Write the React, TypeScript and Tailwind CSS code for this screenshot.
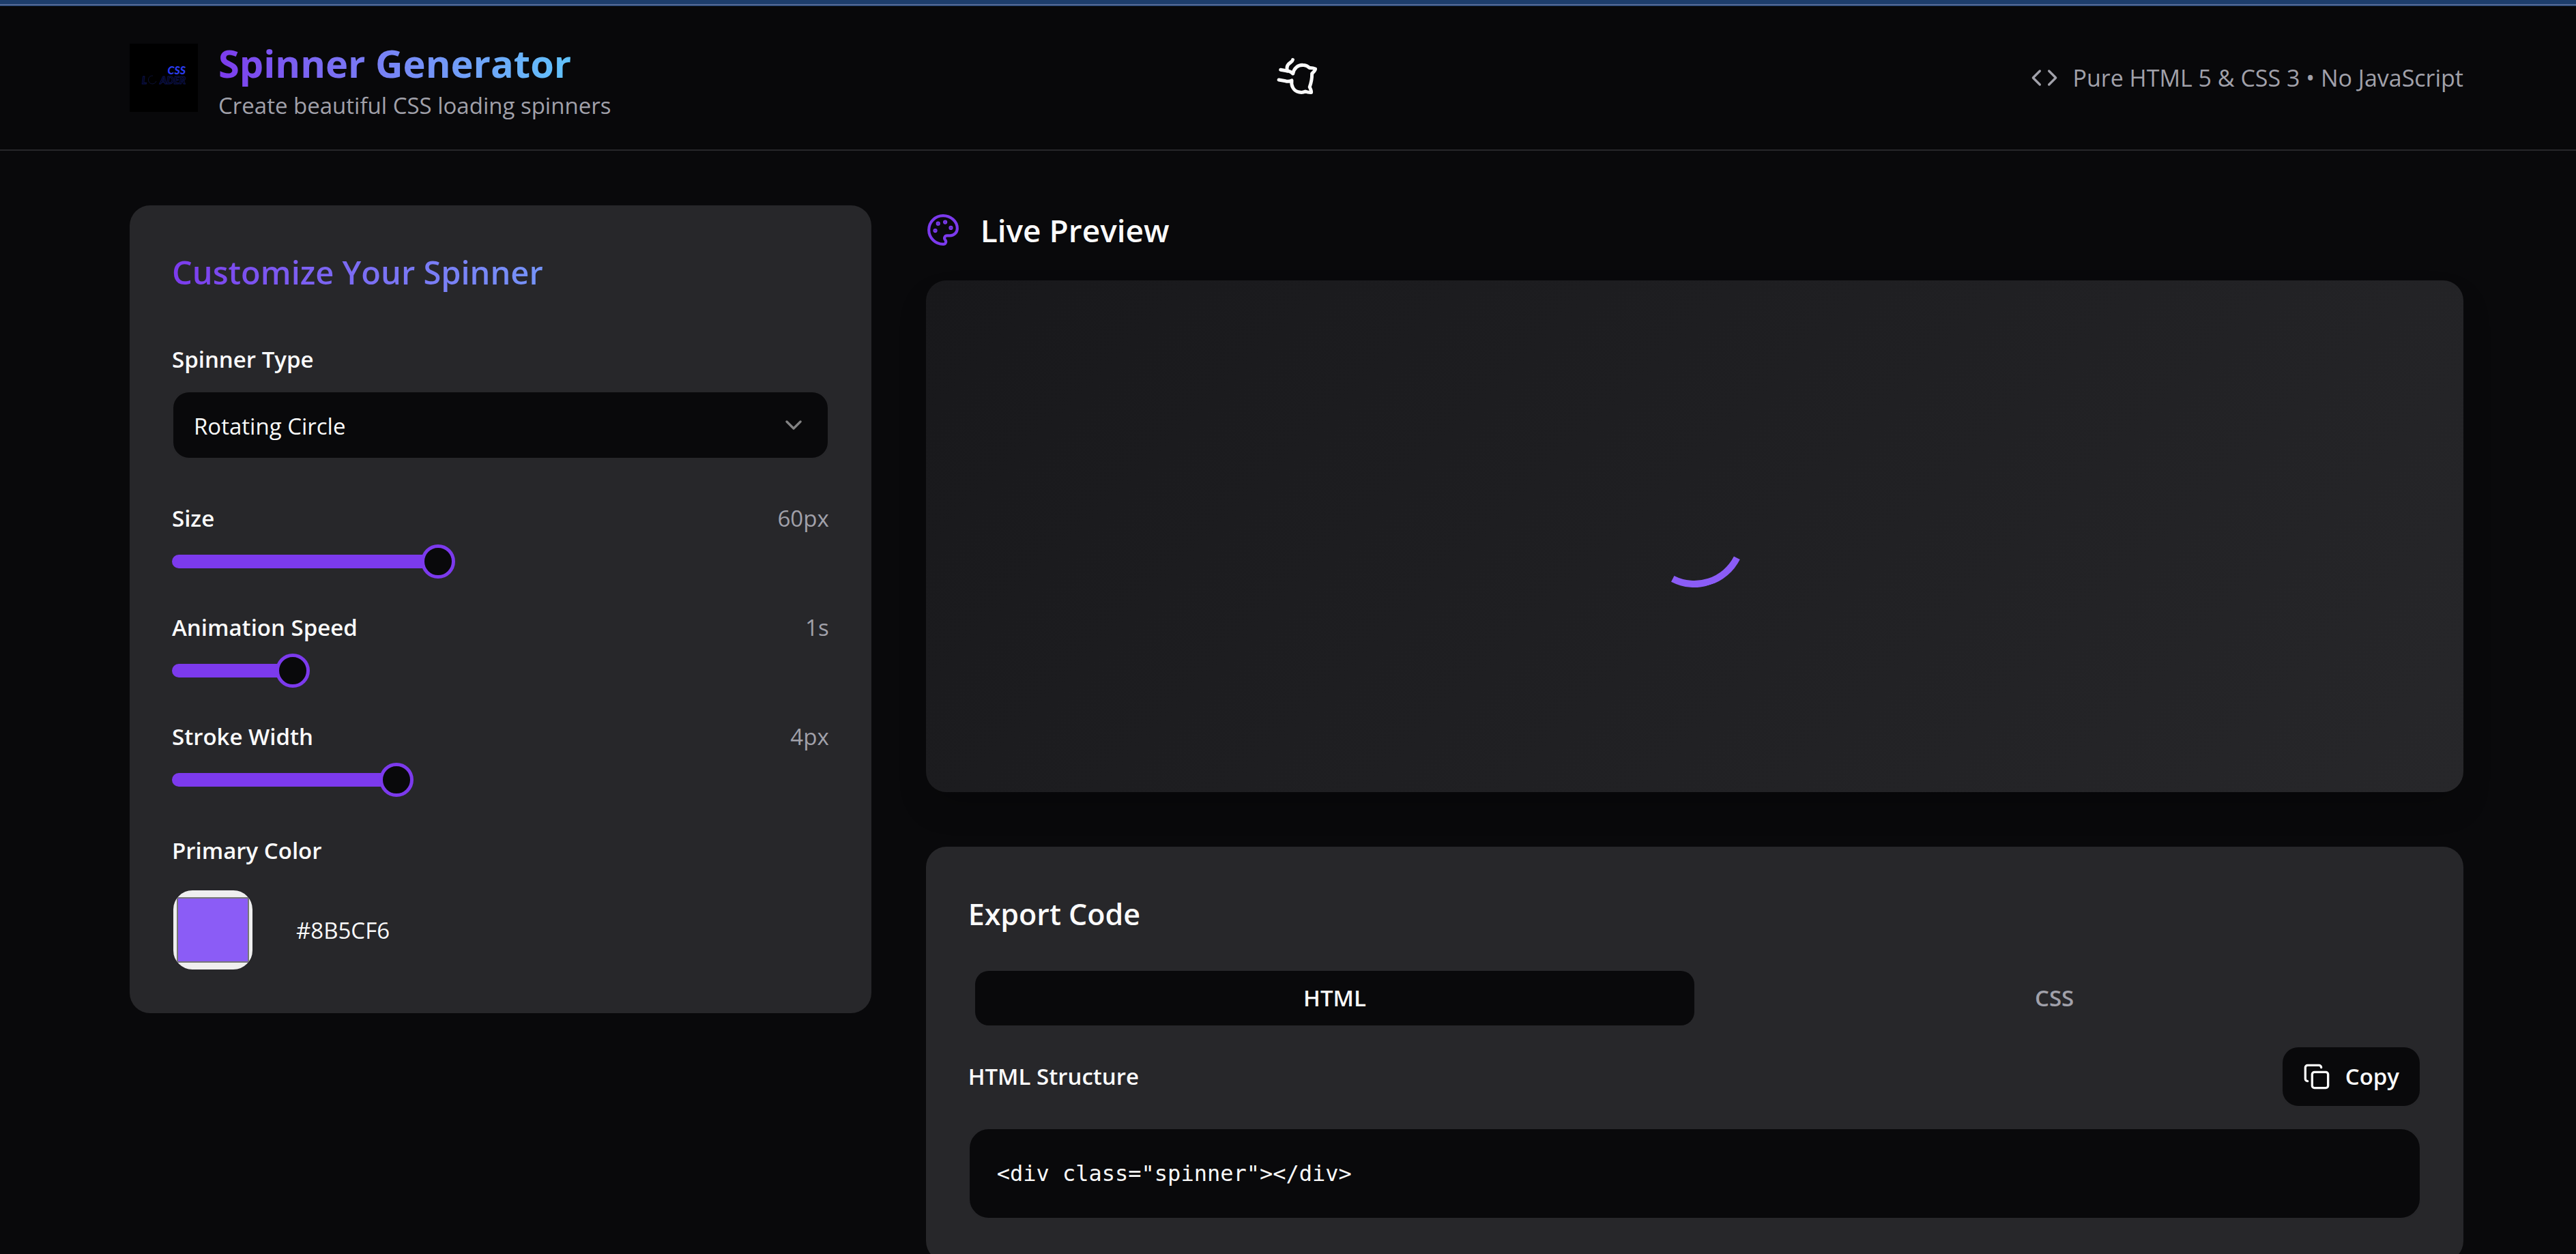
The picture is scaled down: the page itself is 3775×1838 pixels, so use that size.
import { useState, type CSSProperties } from "react";
import { ChevronDown, Code, Copy, Github, Palette } from "lucide-react";

function Logo() {
  return (
    <svg viewBox="0 0 100 100" className="size-[100px] shrink-0 bg-black" role="img" aria-label="CSS Loader">
      <g fontFamily="Lato, sans-serif" fontWeight="900" fontStyle="italic">
        <text x="82" y="45" textAnchor="end" fontSize="16" fill="#2b3cf0">
          CSS
        </text>
        <g fill="none" stroke="#0d1350" strokeWidth="1" fontSize="15">
          <text x="18" y="59">L</text>
          <text x="82" y="59" textAnchor="end">
            ADER
          </text>
        </g>
      </g>
      <path d="M39 55a6 6 0 1 1-5-8" fill="none" stroke="#0b1035" strokeWidth="1" />
    </svg>
  );
}

type SliderProps = {
  id: string;
  label: string;
  unit: string;
  min: number;
  max: number;
  step: number;
  value: number;
  onChange: (value: number) => void;
};

function Slider({ id, label, unit, min, max, step, value, onChange }: SliderProps) {
  const ratio = (value - min) / (max - min);
  const style = { "--fill": `${ratio * 100}%` } as CSSProperties;
  return (
    <div>
      <div className="mb-[13px] flex justify-between leading-[51px]">
        <label htmlFor={id} className="font-semibold">
          {label}
        </label>
        <output htmlFor={id} className="text-[#a1a1aa]">
          {value}
          {unit}
        </output>
      </div>
      <input
        id={id}
        type="range"
        min={min}
        max={max}
        step={step}
        value={value}
        onChange={(e) => onChange(Number(e.target.value))}
        style={style}
        className="block h-[50px] w-full cursor-pointer appearance-none bg-transparent [&::-webkit-slider-runnable-track]:h-[20px] [&::-webkit-slider-runnable-track]:rounded-full [&::-webkit-slider-runnable-track]:bg-[linear-gradient(to_right,#7c3aed_var(--fill),transparent_var(--fill))] [&::-webkit-slider-thumb]:mt-[-15px] [&::-webkit-slider-thumb]:size-[50px] [&::-webkit-slider-thumb]:appearance-none [&::-webkit-slider-thumb]:rounded-full [&::-webkit-slider-thumb]:border-[5px] [&::-webkit-slider-thumb]:border-[#7c3aed] [&::-webkit-slider-thumb]:bg-[#09090b]"
      />
    </div>
  );
}

function Header() {
  return (
    <header className="border-b-2 border-[#27272a] bg-[#08080a]">
      <div className="grid grid-cols-[1fr_auto_1fr] items-center py-[37px] pr-[165px] pl-[190px]">
        <div className="flex items-center gap-[30px]">
          <Logo />
          <div className="pt-[10px]">
            <h1 className="w-fit bg-gradient-to-r from-[#7c3aed] to-[#60c3fc] bg-clip-text text-[56px] leading-[72px] font-bold text-transparent">
              Spinner Generator
            </h1>
            <p className="text-[33px] leading-[54px] text-[#a1a1aa]">Create beautiful CSS loading spinners</p>
          </div>
        </div>
        <a href="#github" aria-label="GitHub">
          <Github className="size-[60px] rotate-[100deg]" />
        </a>
        <div className="flex items-center gap-[22px] justify-self-end text-[34px] text-[#a1a1aa]">
          <Code className="size-[40px]" />
          <span>Pure HTML 5 &amp; CSS 3 • No JavaScript</span>
        </div>
      </div>
    </header>
  );
}

function Customizer() {
  const [size, setSize] = useState(60);
  const [speed, setSpeed] = useState(1);
  const [stroke, setStroke] = useState(4);
  const [color, setColor] = useState("#8B5CF6");
  return (
    <section className="rounded-[30px] bg-[#27272a] p-[62px]">
      <h2 className="mb-[66px] bg-gradient-to-r from-[#7c3aed] to-[#60cdff] bg-clip-text text-[47px] leading-[72px] font-semibold text-transparent">
        Customize Your Spinner
      </h2>
      <label htmlFor="type" className="mb-[21px] block leading-[51px] font-semibold">
        Spinner Type
      </label>
      <div className="relative mb-[61px]">
        <select
          id="type"
          className="block h-[100px] w-full appearance-none rounded-[25px] border-2 border-[#27272a] bg-[#09090b] px-[30px] pt-[3px]"
        >
          <option>Rotating Circle</option>
        </select>
        <ChevronDown className="pointer-events-none absolute top-[30px] right-[32px] size-[40px] opacity-50" />
      </div>
      <div className="flex flex-col gap-[46px]">
        <Slider id="size" label="Size" unit="px" min={20} max={120} step={1} value={size} onChange={setSize} />
        <Slider id="speed" label="Animation Speed" unit="s" min={0.5} max={3.5} step={0.1} value={speed} onChange={setSpeed} />
        <Slider id="stroke" label="Stroke Width" unit="px" min={1} max={10} step={1} value={stroke} onChange={setStroke} />
      </div>
      <label htmlFor="color" className="mt-[53px] mb-[31px] block leading-[51px] font-semibold">
        Primary Color
      </label>
      <div className="flex items-center gap-[32px]">
        <input
          id="color"
          type="color"
          value={color.toLowerCase()}
          onChange={(e) => setColor(e.target.value.toUpperCase())}
          className="h-[120px] w-[120px] shrink-0 cursor-pointer appearance-none rounded-[30px] border-2 border-[#27272a] bg-[#efefef] px-[5px] py-[10px] [&::-webkit-color-swatch]:rounded-none [&::-webkit-color-swatch]:border-2 [&::-webkit-color-swatch]:border-[#777777] [&::-webkit-color-swatch-wrapper]:p-0"
        />
        <input
          type="text"
          aria-label="Primary color hex value"
          value={color}
          onChange={(e) => setColor(e.target.value)}
          className="h-[100px] min-w-0 flex-1 bg-transparent px-[30px]"
        />
      </div>
    </section>
  );
}

function Preview() {
  return (
    <section>
      <h2 className="mb-[38px] flex items-center gap-[30px] text-[46px] leading-[72px] font-semibold">
        <Palette className="size-[50px] text-[#7c3aed]" />
        Live Preview
      </h2>
      <div className="flex h-[750px] items-center justify-center rounded-[30px] bg-[linear-gradient(135deg,#18181b,#27272a)] shadow-2xl">
        <div className="size-[150px] rotate-[162deg] rounded-full border-[10px] border-transparent border-t-[#8b5cf6]" />
      </div>
    </section>
  );
}

function ExportCode() {
  const [tab, setTab] = useState("HTML");
  return (
    <section className="rounded-[30px] bg-[#27272a] p-[62px]">
      <h2 className="mb-[36px] text-[43px] leading-[74px] font-semibold">Export Code</h2>
      <div role="tablist" className="mb-[20px] grid h-[100px] grid-cols-2 p-[10px] font-semibold">
        {["HTML", "CSS"].map((name) => (
          <button
            key={name}
            type="button"
            role="tab"
            aria-selected={tab === name}
            onClick={() => setTab(name)}
            className={tab === name ? "rounded-[20px] bg-[#09090b]" : "rounded-[20px] text-[#a1a1aa]"}
          >
            {name}
          </button>
        ))}
      </div>
      <div className="mb-[30px] flex items-center justify-between font-semibold">
        <h3>{tab} Structure</h3>
        <button
          type="button"
          className="flex h-[90px] items-center gap-[22px] rounded-[25px] border-2 border-[#27272a] bg-[#09090b] px-[30px]"
        >
          <Copy className="size-[40px]" />
          Copy
        </button>
      </div>
      <pre className="rounded-[30px] border-2 border-[#27272a] bg-[#09090b] p-[40px] font-['DejaVu_Sans_Mono',monospace] text-[32px] leading-[50px]">
        <code className="font-['DejaVu_Sans_Mono',monospace]">{'<div class="spinner"></div>'}</code>
      </pre>
    </section>
  );
}

export default function App() {
  return (
    <div className="min-h-screen bg-[#09090b] font-['Open_Sans',sans-serif] text-[33px] text-[#fafafa]">
      <div className="h-[9px] bg-[#1d3d6b]">
        <div className="h-[8px] border-b-2 border-[#546a96]" />
      </div>
      <Header />
      <main className="grid grid-cols-3 items-start gap-[80px] pt-[80px] pr-[165px] pl-[190px]">
        <Customizer />
        <div className="col-span-2 flex flex-col gap-[80px]">
          <Preview />
          <ExportCode />
        </div>
      </main>
    </div>
  );
}
